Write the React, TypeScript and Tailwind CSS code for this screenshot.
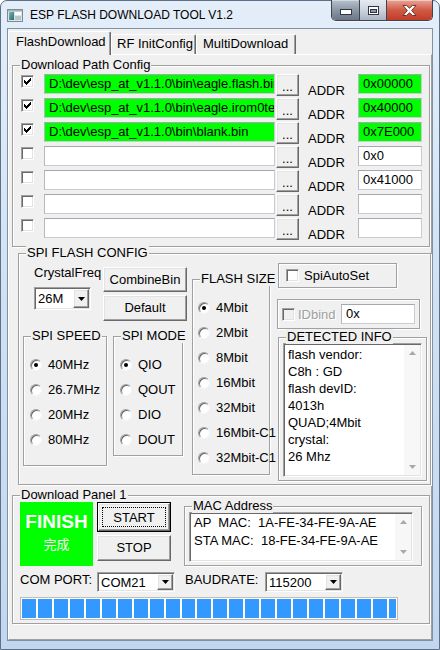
import React from 'react';

const raised =
  'bg-[#f0f0f0] border border-t-white border-l-white border-b-[#696969] border-r-[#696969] shadow-[inset_-1px_-1px_0_#a0a0a0,inset_1px_1px_0_#e3e3e3]';
const sunken =
  'border border-t-[#a0a0a0] border-l-[#a0a0a0] border-b-white border-r-white shadow-[inset_1px_1px_0_#696969,inset_-1px_-1px_0_#e3e3e3]';
const edit = 'border border-[#c9ccd2] border-t-[#a4a7ad] border-l-[#b5b8be]';

const paths = [
  { on: true, path: 'D:\\dev\\esp_at_v1.1.0\\bin\\eagle.flash.bin', addr: '0x00000' },
  { on: true, path: 'D:\\dev\\esp_at_v1.1.0\\bin\\eagle.irom0text.bin', addr: '0x40000' },
  { on: true, path: 'D:\\dev\\esp_at_v1.1.0\\bin\\blank.bin', addr: '0x7E000' },
  { on: false, path: '', addr: '0x0' },
  { on: false, path: '', addr: '0x41000' },
  { on: false, path: '', addr: '' },
  { on: false, path: '', addr: '' },
];

const detected = ['flash vendor:', 'C8h : GD', 'flash devID:', '4013h', 'QUAD;4Mbit', 'crystal:', '26 Mhz'];

function GroupBox({ label, className, children }: { label?: string; className?: string; children?: React.ReactNode }) {
  return (
    <div className={`relative shrink-0 border border-[#a0a0a0] shadow-[inset_1px_1px_0_#fff,1px_1px_0_#fff] ${className ?? ''}`}>
      {label && (
        <span className="absolute left-[7px] -top-[9px] px-[1px] bg-[#f0f0f0] leading-[15px] whitespace-nowrap">{label}</span>
      )}
      {children}
    </div>
  );
}

function Check({ checked, disabled }: { checked?: boolean; disabled?: boolean }) {
  return (
    <span className={`flex w-[13px] h-[13px] shrink-0 items-center justify-center ${sunken} ${disabled ? 'bg-[#f0f0f0]' : 'bg-white'}`}>
      {checked && (
        <svg width="7" height="7" viewBox="0 0 7 7" shapeRendering="crispEdges">
          <path d="M6 0h1v3h-1v1h-1v1h-1v1h-1v1h-1v-1h-1v-1h-1v-3h1v1h1v1h1v-1h1v-1h1z" fill="#000" />
        </svg>
      )}
    </span>
  );
}

function Radio({ checked }: { checked?: boolean }) {
  return (
    <span className="flex w-[12px] h-[12px] shrink-0 items-center justify-center rounded-full bg-white border border-t-[#a0a0a0] border-l-[#a0a0a0] border-b-[#f4f4f4] border-r-[#f4f4f4] shadow-[inset_1px_1px_0_#696969]">
      {checked && <span className="w-[4px] h-[4px] rounded-full bg-black" />}
    </span>
  );
}

function RadioList({ items, selected, ml }: { items: string[]; selected: number; ml: string }) {
  return (
    <div className={`pt-[15px] ${ml}`}>
      {items.map((t, i) => (
        <div key={t} className="flex items-center h-[25px]">
          <Radio checked={i === selected} />
          <span className="ml-[6px] leading-[15px] whitespace-nowrap">{t}</span>
        </div>
      ))}
    </div>
  );
}

function Arrow({ up, color = '#000' }: { up?: boolean; color?: string }) {
  return (
    <svg width="7" height="4" viewBox="0 0 7 4">
      <path d={up ? 'M0 4 L3.5 0 L7 4 Z' : 'M0 0 L7 0 L3.5 4 Z'} fill={color} />
    </svg>
  );
}

function Combo({ value, className }: { value: string; className: string }) {
  return (
    <div className={`flex bg-white p-[1px] ${sunken} ${className}`}>
      <span className="flex-1 pl-[2px] flex items-center leading-[15px]">{value}</span>
      <span className={`w-[16px] flex items-center justify-center ${raised}`}>
        <Arrow />
      </span>
    </div>
  );
}

function Scrollbar({ upTop, downBottom }: { upTop: string; downBottom: string }) {
  return (
    <div className="w-[16px] h-full bg-[#f7f7f7] flex flex-col items-center justify-between">
      <span className={upTop}>
        <Arrow up color="#a9a9a9" />
      </span>
      <span className={downBottom}>
        <Arrow color="#a9a9a9" />
      </span>
    </div>
  );
}

function Tab({ label, active, className }: { label: string; active?: boolean; className: string }) {
  return (
    <div
      className={`relative rounded-t-[2px] border border-b-0 border-t-white border-l-white border-r-[#696969] shadow-[inset_-1px_0_0_#a0a0a0] bg-[#f0f0f0] whitespace-nowrap leading-[16px] ${
        active ? 'z-10 h-[24px] -mb-[1px] pt-[2px]' : 'h-[20px] pt-[1px]'
      } ${className}`}
    >
      {label}
    </div>
  );
}

function TitleIcon() {
  return (
    <svg width="16" height="13" viewBox="0 0 16 13">
      <defs>
        <linearGradient id="ic" x1="0" y1="0" x2="1" y2="1">
          <stop offset="0" stopColor="#7fb3b8" />
          <stop offset="1" stopColor="#1f6f6a" />
        </linearGradient>
      </defs>
      <rect x="0.5" y="0.5" width="15" height="12" fill="#dfe3e6" stroke="#7e8a94" />
      <rect x="2" y="3" width="5" height="8" fill="url(#ic)" />
      <rect x="8" y="3" width="6" height="3" fill="#ffffff" />
      <rect x="8" y="7" width="6" height="4" fill="#b9c3cb" />
      <rect x="1" y="1" width="14" height="1.5" fill="#9fb2c4" />
    </svg>
  );
}

export default function App() {
  return (
    <div className="w-[440px] h-[650px] bg-white font-['Liberation_Sans',Arial,sans-serif] text-[13px] text-black">
      <div className="w-[440px] h-[650px] flex flex-col rounded-t-[7px] border border-[#5d7089] bg-gradient-to-b from-[#e3eef9] via-[#cfe0f2] to-[#c2d7ee]">
        {/* title bar */}
        <div className="h-[27px] flex items-start shrink-0">
          <span className="ml-[6px] mt-[8px]">
            <TitleIcon />
          </span>
          <span className="ml-[7px] mt-[7px] text-[12px] leading-[15px] whitespace-nowrap">ESP FLASH DOWNLOAD TOOL V1.2</span>
          <div className="ml-auto mr-[6px] -mt-[1px] flex h-[21px] rounded-b-[5px] border border-t-0 border-[#3b4655] overflow-hidden shadow-[0_1px_0_#ffffff80]">
            <div className="w-[28px] flex items-center justify-center bg-gradient-to-b from-[#b9c2cd] via-[#8c97a5] to-[#6c7787] border-r border-[#3b4655] shadow-[inset_0_1px_0_#ffffff60]">
              <svg width="12" height="6" viewBox="0 0 12 6" className="mt-[4px]">
                <rect x="0.5" y="0.5" width="11" height="5" fill="#fff" stroke="#2d3642" />
              </svg>
            </div>
            <div className="w-[27px] flex items-center justify-center bg-gradient-to-b from-[#e6ebf1] via-[#ccd4dd] to-[#aab4c1] border-r border-[#3b4655]">
              <svg width="11" height="9" viewBox="0 0 11 9">
                <rect x="0.5" y="0.5" width="10" height="8" fill="#fff" stroke="#2d3642" />
                <rect x="2.5" y="3.5" width="6" height="3" fill="#8e99a6" stroke="#2d3642" />
              </svg>
            </div>
            <div className="w-[45px] flex items-center justify-center bg-gradient-to-b from-[#e8a497] via-[#d05a45] to-[#c23c27] shadow-[inset_0_1px_0_#ffffff70]">
              <svg width="15" height="11" viewBox="0 0 15 11">
                <path
                  d="M1 0.5 L4.5 0.5 L7.5 3.2 L10.5 0.5 L14 0.5 L9.6 5.5 L14 10.5 L10.5 10.5 L7.5 7.8 L4.5 10.5 L1 10.5 L5.4 5.5 Z"
                  fill="#fff"
                  stroke="#5a2a22"
                  strokeWidth="0.9"
                  strokeLinejoin="round"
                />
              </svg>
            </div>
          </div>
        </div>

        {/* client area */}
        <div className="mx-[6px] w-[426px] h-[613px] border border-[#7f91a7] bg-[#f0f0f0] flex flex-col">
          <div className="h-[25px] flex items-end shrink-0">
            <Tab label="FlashDownload" active className="w-[103px] pl-[7px]" />
            <Tab label="RF InitConfig" className="w-[85px] pl-[5px]" />
            <Tab label="MultiDownload" className="w-[100px] pl-[6px]" />
          </div>

          <div className="h-[586px] border border-t-white border-l-white border-r-[#a0a0a0] border-b-[#a0a0a0] flex flex-col">
            {/* Download Path Config */}
            <GroupBox label="Download Path Config" className="ml-[3px] mt-[10px] w-[418px] h-[182px]">
              <div className="pt-[8px] flex flex-col gap-[2px]">
                {paths.map((r, i) => (
                  <div key={i} className="flex items-start h-[22px] pl-[8px]">
                    <div className="mt-[1px]">
                      <Check checked={r.on} />
                    </div>
                    <div
                      className={`ml-[10px] w-[231px] h-[20px] ${edit} ${
                        r.path ? 'bg-[#00ff00]' : 'bg-white'
                      } pl-[4px] leading-[18px] overflow-hidden whitespace-nowrap`}
                    >
                      {r.path}
                    </div>
                    <div className={`ml-[1px] w-[23px] h-[22px] ${raised} flex items-center justify-center leading-[12px] pt-[3px]`}>
                      ...
                    </div>
                    <div className="ml-[9px] w-[50px] mt-[9px] leading-[15px]">ADDR</div>
                    <div
                      className={`w-[64px] h-[20px] ${edit} ${
                        i < 3 ? 'bg-[#00ff00]' : 'bg-white'
                      } pl-[4px] leading-[18px] whitespace-nowrap overflow-hidden`}
                    >
                      {r.addr}
                    </div>
                  </div>
                ))}
              </div>
            </GroupBox>

            {/* SPI FLASH CONFIG */}
            <GroupBox label="SPI FLASH CONFIG" className="ml-[9px] mt-[6px] w-[413px] h-[232px]">
              <div className="flex items-start">
                {/* left column */}
                <div className="ml-[4px] w-[164px] shrink-0">
                  <div className="mt-[11px] flex items-start">
                    <div className="ml-[11px] w-[57px]">
                      <div className="h-[15px] leading-[15px] whitespace-nowrap">CrystalFreq</div>
                      <Combo value="26M" className="mt-[7px] w-[57px] h-[23px]" />
                    </div>
                    <div className="ml-[12px] mt-[2px] w-[84px]">
                      <div className={`h-[25px] ${raised} flex items-center justify-center`}>CombineBin</div>
                      <div className={`mt-[3px] h-[26px] ${raised} flex items-center justify-center`}>Default</div>
                    </div>
                  </div>
                  <div className="mt-[15px] flex items-start">
                    <GroupBox label="SPI SPEED" className="w-[84px] h-[130px]">
                      <RadioList items={['40MHz', '26.7MHz', '20MHz', '80MHz']} selected={0} ml="ml-[6px]" />
                    </GroupBox>
                    <GroupBox label="SPI MODE" className="ml-[6px] w-[70px] h-[120px]">
                      <RadioList items={['QIO', 'QOUT', 'DIO', 'DOUT']} selected={0} ml="ml-[6px]" />
                    </GroupBox>
                  </div>
                </div>

                {/* flash size */}
                <GroupBox label="FLASH SIZE" className="ml-[5px] mt-[25px] w-[78px] h-[196px]">
                  <RadioList
                    items={['4Mbit', '2Mbit', '8Mbit', '16Mbit', '32Mbit', '16Mbit-C1', '32Mbit-C1']}
                    selected={0}
                    ml="ml-[5px]"
                  />
                </GroupBox>

                {/* right column */}
                <div className="ml-[7px] mt-[9px] w-[150px] shrink-0">
                  <GroupBox className="ml-[1px] w-[119px] h-[25px] flex items-center pl-[7px]">
                    <Check />
                    <span className="ml-[5px] leading-[15px]">SpiAutoSet</span>
                  </GroupBox>
                  <GroupBox className="mt-[11px] w-[143px] h-[30px] flex items-center pl-[4px]">
                    <Check disabled />
                    <span className="ml-[3px] w-[43px] leading-[15px] text-[#a0a0a0] [text-shadow:1px_1px_0_#fff]">IDbind</span>
                    <div className={`w-[74px] h-[20px] bg-white ${edit} pl-[4px] leading-[18px]`}>0x</div>
                  </GroupBox>
                  <GroupBox label="DETECTED INFO" className="ml-[1px] mt-[8px] w-[149px] h-[144px]">
                    <div className={`ml-[4px] mt-[5px] w-[139px] h-[134px] bg-white ${sunken} p-[1px] flex`}>
                      <div className="flex-1 pl-[3px] pt-[1px]">
                        {detected.map((t) => (
                          <div key={t} className="leading-[17px] whitespace-nowrap">
                            {t}
                          </div>
                        ))}
                      </div>
                      <Scrollbar upTop="mt-[6px]" downBottom="mb-[6px]" />
                    </div>
                  </GroupBox>
                </div>
              </div>
            </GroupBox>

            {/* Download Panel 1 */}
            <GroupBox label="Download Panel 1" className="ml-[3px] mt-[10px] w-[418px] h-[129px]">
              <div className="mt-[6px] flex items-start">
                <div className="ml-[7px] w-[73px] h-[64px] bg-[#00ff00] text-white flex flex-col items-center">
                  <span className="mt-[9px] text-[19px] leading-[22px] font-bold font-['Liberation_Sans_Narrow','Arial_Narrow','Liberation_Sans',sans-serif]">
                    FINISH
                  </span>
                  <span className="mt-[3px] text-[13px] leading-[16px] font-['Noto_Sans_CJK_SC',sans-serif]">完成</span>
                </div>
                <div className="ml-[4px] w-[74px]">
                  <div className="h-[30px] border border-black">
                    <div className={`h-full ${raised} p-[3px]`}>
                      <div className="h-full border border-dotted border-black flex items-center justify-center leading-[15px]">
                        START
                      </div>
                    </div>
                  </div>
                  <div className={`mt-[3px] h-[26px] ${raised} flex items-center justify-center`}>STOP</div>
                </div>
                <GroupBox label="MAC Address" className="ml-[13px] mt-[4px] w-[238px] h-[60px]">
                  <div className={`ml-[4px] mt-[5px] w-[224px] h-[50px] bg-white ${sunken} p-[1px] flex`}>
                    <div className="flex-1 pl-[3px]">
                      <div className="leading-[18px] whitespace-pre">AP  MAC:  1A-FE-34-FE-9A-AE</div>
                      <div className="leading-[18px] whitespace-pre">STA MAC:  18-FE-34-FE-9A-AE</div>
                    </div>
                    <Scrollbar upTop="mt-[6px]" downBottom="mb-[6px]" />
                  </div>
                </GroupBox>
              </div>

              <div className="mt-[6px] flex items-start h-[20px]">
                <span className="ml-[7px] w-[77px] leading-[16px] whitespace-nowrap">COM PORT:</span>
                <Combo value="COM21" className="w-[78px] h-[20px]" />
                <span className="ml-[10px] w-[80px] leading-[16px] whitespace-nowrap">BAUDRATE:</span>
                <Combo value="115200" className="w-[78px] h-[20px]" />
              </div>

              <div className="ml-[7px] mt-[5px] w-[378px] h-[23px] border border-[#bcbcbc] bg-white p-[1px] flex gap-[2px]">
                {Array.from({ length: 23 }).map((_, i) => (
                  <div key={i} className="w-[14px] h-full bg-[#3399ff]" />
                ))}
                <div className="w-[7px] h-full bg-[#3399ff]" />
              </div>
            </GroupBox>
          </div>
        </div>
      </div>
    </div>
  );
}
